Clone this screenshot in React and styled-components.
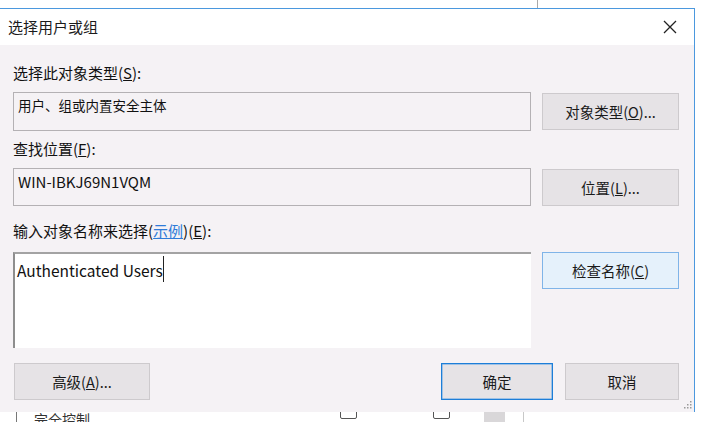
import React from "react";
import styled, { createGlobalStyle } from "styled-components";

const Global = createGlobalStyle`
  html, body { margin: 0; padding: 0; background: #ffffff; }
  body { font-family: "Noto Sans CJK SC", "Noto Sans", sans-serif; color: #111; }
  * { box-sizing: border-box; }
`;

const Screen = styled.div`
  width: 701px;
  height: 422px;
  overflow: hidden;
  display: flex;
  flex-direction: column;
  background: #fff;
`;

const TopStrip = styled.div`
  height: 8px;
  flex: none;
  display: flex;
  padding-left: 537px;
`;

const BgLine = styled.div`
  width: 1px;
  background: ${(p) => p.$color || "#a9a9a9"};
  height: 100%;
`;

const Dialog = styled.div`
  position: relative;
  width: 695px;
  height: 404px;
  flex: none;
  border-top: 1px solid #4b98de;
  border-right: 1px solid #4b98de;
  display: flex;
  flex-direction: column;
  background: #f5f2f5;
`;

const TitleBar = styled.div`
  height: 36px;
  flex: none;
  background: #ffffff;
  display: flex;
  align-items: center;
  justify-content: space-between;
  padding: 0 10px 0 8px;
`;

const Title = styled.div`
  font-size: 15px;
  color: #1b1b1b;
  line-height: 20px;
`;

const CloseButton = styled.div`
  width: 20px;
  height: 20px;
  display: flex;
  align-items: center;
  justify-content: center;
  margin-right: 4px;
`;

const Body = styled.div`
  flex: 1;
  display: flex;
  flex-direction: column;
  padding: 18px 15px 0 13px;
`;

const Label = styled.div`
  font-size: 15px;
  line-height: 20px;
  height: 20px;
  color: #111;
  margin-top: ${(p) => p.$top || 0}px;
`;

const Underline = styled.span`
  text-decoration: underline;
  text-underline-offset: 1px;
`;

const Link = styled.span`
  color: #2f7bd8;
`;

const Row = styled.div`
  display: grid;
  grid-template-columns: 518px 137px;
  column-gap: 11px;
  align-items: start;
  margin-top: ${(p) => p.$top || 0}px;
`;

const Field = styled.div`
  height: ${(p) => p.$h || 39}px;
  border: 1px solid #b4b1b4;
  background: #f5f2f5;
  padding: ${(p) => p.$pt || 2}px 4px 0 4px;
  font-size: ${(p) => p.$fs || 14}px;
  line-height: 20px;
  color: #111;
  white-space: nowrap;
`;

const TextArea = styled.div`
  height: 96px;
  background: #ffffff;
  border-top: 2px solid #a3a3a3;
  border-left: 2px solid #8e8e8e;
  padding: 5px 2px 0 2px;
  font-size: 15.5px;
  line-height: 22px;
  color: #111;
  display: flex;
  align-items: flex-start;
`;

const Caret = styled.span`
  display: inline-block;
  width: 1px;
  height: 26px;
  margin-top: -3px;
  background: #222;
`;

const Button = styled.div`
  height: ${(p) => p.$h || 37}px;
  width: ${(p) => p.$w || 137}px;
  margin-top: ${(p) => p.$mt || 0}px;
  display: flex;
  align-items: center;
  justify-content: center;
  font-size: 14.5px;
  color: #1a1a1a;
  background: ${(p) => (p.$focus ? "#e5f1fb" : "#e6e3e6")};
  border: 1px solid
    ${(p) => (p.$focus ? "#7fb4e8" : p.$default ? "#1d7ed8" : "#cdcacd")};
  box-shadow: ${(p) => (p.$default ? "inset 0 0 0 0.5px #5aa2e4" : "none")};
`;

const ButtonRow = styled.div`
  display: flex;
  align-items: center;
  margin-top: 15px;
  padding-left: 1px;
`;

const Spacer = styled.div`
  flex: 1;
`;

const ButtonGap = styled.div`
  width: 12px;
`;

const Grip = styled.svg`
  position: absolute;
  right: 2px;
  bottom: 3px;
`;

const BottomStrip = styled.div`
  flex: 1;
  display: flex;
  align-items: flex-end;
  overflow: hidden;
  background: #ffffff;
  position: relative;
`;

const BgText = styled.div`
  flex: none;
  font-size: 14px;
  line-height: 18px;
  color: #333;
  margin-left: 17px;
  margin-bottom: -6px;
`;

const BgCheck = styled.div`
  flex: none;
  width: 17px;
  height: 14px;
  border: 1px solid #555;
  border-radius: 2px;
  margin-left: ${(p) => p.$ml}px;
  margin-bottom: 3px;
`;

const BgBlock = styled.div`
  flex: none;
  width: 21px;
  height: 10px;
  background: #d9d7d9;
  margin-left: ${(p) => p.$ml}px;
`;

const BgPane = styled.div`
  flex: none;
  width: ${(p) => p.$w}px;
  height: 10px;
  background: ${(p) => p.$bg};
  margin-left: ${(p) => p.$ml || 0}px;
`;

export default function App() {
  return (
    <>
      <Global />
      <Screen>
        <TopStrip>
          <BgLine />
        </TopStrip>
        <Dialog>
          <TitleBar>
            <Title>选择用户或组</Title>
            <CloseButton>
              <svg width="14" height="14" viewBox="0 0 14 14">
                <path d="M1 1L13 13M13 1L1 13" stroke="#222" strokeWidth="1.3" />
              </svg>
            </CloseButton>
          </TitleBar>
          <Body>
            <Label>
              选择此对象类型(<Underline>S</Underline>):
            </Label>
            <Row $top={9}>
              <Field $fs={13.5}>用户、组或内置安全主体</Field>
              <Button $mt={1}>
                对象类型(<Underline>O</Underline>)...
              </Button>
            </Row>
            <Label $top={8}>
              查找位置(<Underline>F</Underline>):
            </Label>
            <Row $top={9}>
              <Field $h={38} $pt={3} $fs={15}>WIN-IBKJ69N1VQM</Field>
              <Button $mt={1}>
                位置(<Underline>L</Underline>)...
              </Button>
            </Row>
            <Label $top={15}>
              输入对象名称来选择(<Link><Underline>示例</Underline></Link>)(<Underline>E</Underline>):
            </Label>
            <Row $top={11}>
              <TextArea>
                <span>Authenticated Users</span>
                <Caret />
              </TextArea>
              <Button $focus>
                检查名称(<Underline>C</Underline>)
              </Button>
            </Row>
            <ButtonRow>
              <Button $w={136}>
                高级(<Underline>A</Underline>)...
              </Button>
              <Spacer />
              <Button $w={112} $default>
                确定
              </Button>
              <ButtonGap />
              <Button $w={114}>取消</Button>
            </ButtonRow>
          </Body>
          <Grip width="8" height="8" viewBox="0 0 8 8">
            <rect x="6" y="0" width="1.5" height="1.5" fill="#999" />
            <rect x="3" y="3" width="1.5" height="1.5" fill="#999" />
            <rect x="6" y="3" width="1.5" height="1.5" fill="#999" />
            <rect x="0" y="6" width="1.5" height="1.5" fill="#999" />
            <rect x="3" y="6" width="1.5" height="1.5" fill="#999" />
            <rect x="6" y="6" width="1.5" height="1.5" fill="#999" />
          </Grip>
        </Dialog>
        <BottomStrip>
          <BgPane $w={1} $bg="#777" $ml={16} />
          <BgText>完全控制</BgText>
          <BgCheck $ml={250} />
          <BgCheck $ml={76} />
          <BgBlock $ml={34} />
          <BgPane $w={1} $bg="#c8c8c8" $ml={18} />
        </BottomStrip>
      </Screen>
    </>
  );
}
